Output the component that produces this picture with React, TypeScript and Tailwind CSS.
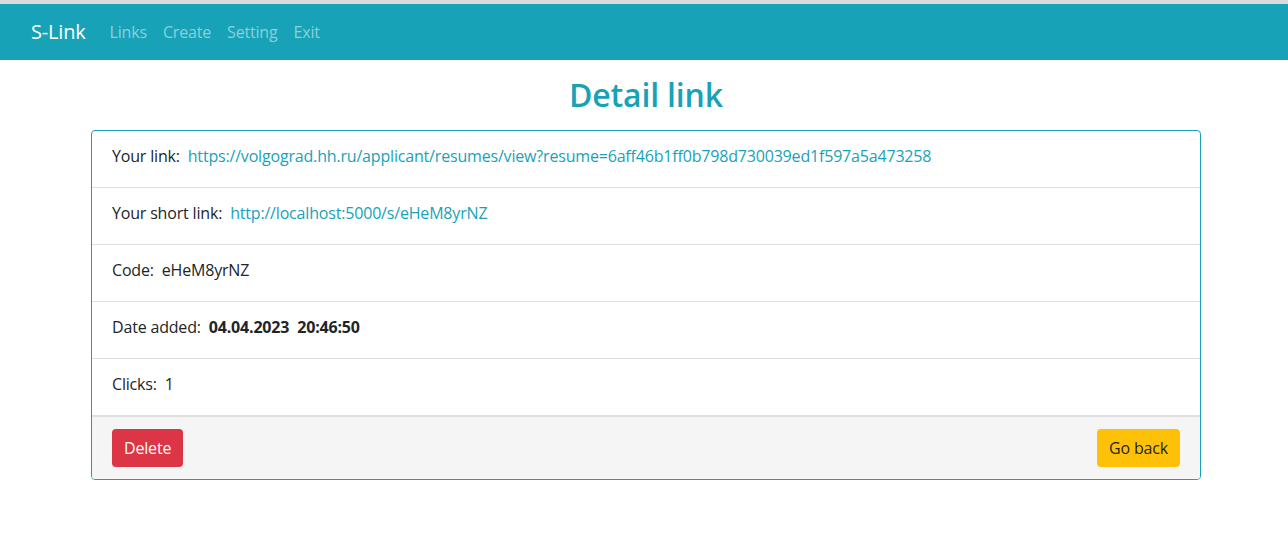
import React from "react";

const rows = [
  { label: "Your link:", value: "https://volgograd.hh.ru/applicant/resumes/view?resume=6aff46b1ff0b798d730039ed1f597a5a473258", kind: "link" },
  { label: "Your short link:", value: "http://localhost:5000/s/eHeM8yrNZ", kind: "link" },
  { label: "Code:", value: "eHeM8yrNZ", kind: "text" },
  { label: "Date added:", value: "04.04.2023\u00a0\u00a020:46:50", kind: "bold" },
  { label: "Clicks:", value: "1", kind: "text" },
];

export default function App() {
  return (
    <div className="min-h-[554px] bg-white text-[16px] leading-6 tracking-[-0.18px] text-[#212529] font-['Open_Sans',sans-serif]">
      <div className="h-[4px] bg-[#dadada]" />
      <nav className="flex h-[56px] items-center bg-[#18a2b8] px-[31px]">
        <a className="mr-4 text-[20px] text-white">S-Link</a>
        <div className="flex">
          {["Links", "Create", "Setting", "Exit"].map((n) => (
            <a key={n} className="px-2 text-[#8bd0db]">
              {n}
            </a>
          ))}
        </div>
      </nav>

      <div className="ml-[91px] w-[1110px] pt-[16px]">
        <h1 className="mb-[16px] h-[38px] text-center text-[32px] font-semibold leading-[38px] text-[#18a2b8]">
          Detail link
        </h1>

        <div className="overflow-hidden rounded border border-[#18a2b8]">
          {rows.map((r) => (
            <div key={r.label} className="border-b border-[#dfdfdf] px-5 pt-[13px] pb-[19px]">
              {r.label}
              {"\u00a0\u00a0"}
              {r.kind === "link" && <a className="text-[#18a2b8]">{r.value}</a>}
              {r.kind === "text" && <span>{r.value}</span>}
              {r.kind === "bold" && <b className="font-bold">{r.value}</b>}
            </div>
          ))}
          <div className="flex items-center justify-between border-t border-[#dfdfdf] bg-[#f5f5f5] px-5 py-3">
            <button className="h-[38px] rounded bg-[#dc3545] px-3 text-white">Delete</button>
            <button className="h-[38px] rounded bg-[#ffc107] px-3 text-[#212529]">Go back</button>
          </div>
        </div>
      </div>
    </div>
  );
}
